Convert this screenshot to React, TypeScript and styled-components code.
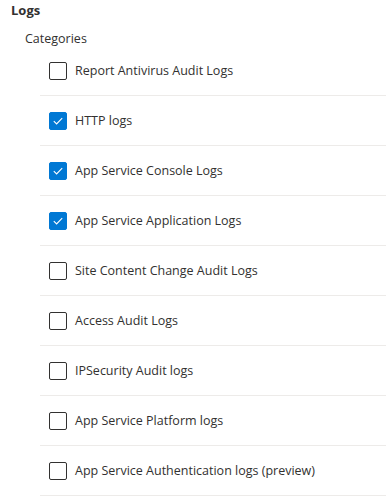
import React, { useState } from 'react';
import styled, { createGlobalStyle } from 'styled-components';

const categories = [
  { name: 'Report Antivirus Audit Logs', checked: false },
  { name: 'HTTP logs', checked: true },
  { name: 'App Service Console Logs', checked: true },
  { name: 'App Service Application Logs', checked: true },
  { name: 'Site Content Change Audit Logs', checked: false },
  { name: 'Access Audit Logs', checked: false },
  { name: 'IPSecurity Audit logs', checked: false },
  { name: 'App Service Platform logs', checked: false },
  { name: 'App Service Authentication logs (preview)', checked: false },
];

const App: React.FC = () => {
  const [items, setItems] = useState(categories);

  const toggle = (index: number) => {
    setItems(items.map((item, i) => (i === index ? { ...item, checked: !item.checked } : item)));
  };

  return (
    <>
      <GlobalStyle />
      <Section>
        <Heading>Logs</Heading>
        <SubHeading>Categories</SubHeading>
        <List>
          {items.map((item, i) => (
            <Row key={item.name} onClick={() => toggle(i)}>
              <Box $checked={item.checked}>
                {item.checked && (
                  <svg width="12" height="12" viewBox="0 0 12 12">
                    <path d="M1.8 6.2 L4.6 9 L10.2 3.2" fill="none" stroke="#fff" strokeWidth="1.1" />
                  </svg>
                )}
              </Box>
              <Label>{item.name}</Label>
            </Row>
          ))}
        </List>
      </Section>
    </>
  );
};

const GlobalStyle = createGlobalStyle`
  body {
    margin: 0;
    background: #fff;
    font-family: "Open Sans", "Noto Sans", sans-serif;
    color: #323130;
  }
`;

const Section = styled.div`
  padding: 1px 0 0 11px;
`;

const Heading = styled.div`
  font-size: 13px;
  font-weight: 700;
  line-height: 18px;
  color: #323130;
`;

const SubHeading = styled.div`
  font-size: 12.5px;
  line-height: 16px;
  margin: 12px 0 0 14px;
  color: #323130;
`;

const List = styled.div`
  margin: -1px 0 0 29px;
`;

const Row = styled.div`
  display: flex;
  align-items: center;
  height: 49px;
  border-bottom: 1px solid #edebe9;
  padding-left: 9px;
  cursor: pointer;
`;

const Box = styled.div<{ $checked: boolean }>`
  box-sizing: border-box;
  width: 18px;
  height: 18px;
  border-radius: 2px;
  border: 1px solid ${p => (p.$checked ? '#0078d4' : '#323130')};
  background: ${p => (p.$checked ? '#0078d4' : '#fff')};
  display: flex;
  align-items: center;
  justify-content: center;
  flex-shrink: 0;
`;

const Label = styled.span`
  margin-left: 8px;
  font-size: 12.5px;
  color: #323130;
`;

export default App;
